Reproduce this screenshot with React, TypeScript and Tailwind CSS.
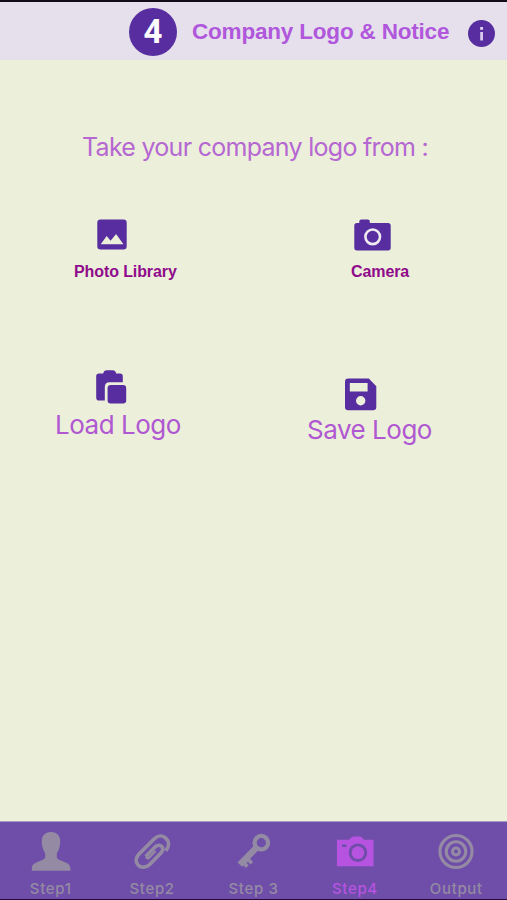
import type { ReactNode } from "react";
import clsx from "clsx";

interface TabItem {
  label: string;
  icon: ReactNode;
  active?: boolean;
}

function InfoIcon() {
  return (
    <svg width="27" height="27" viewBox="0 0 27 27" className="shrink-0">
      <circle cx="13.5" cy="13.5" r="13.5" fill="#572d9f" />
      <rect x="12.2" y="7" width="2.8" height="2.8" fill="#e0d5f0" />
      <rect x="12.2" y="12" width="2.8" height="8.500" fill="#d8caec" />
    </svg>
  );
}

function PhotoIcon() {
  return (
    <svg width="30" height="31" viewBox="0 0 30 31" fill="#572d9f">
      <path
        fillRule="evenodd"
        d="M3.500 .5h23q3.200 0 3.200 3.200v23.600q0 3.200-3.200 3.200h-23q-3.200 0-3.200-3.200v-23.600q0-3.200 3.200-3.200ZM3.700 25.200h22.700l-7.300-10.200-5.500 6.700-3.900-4.700Z"
      />
    </svg>
  );
}

function CameraIcon() {
  return (
    <svg width="37" height="32" viewBox="0 0 37 32">
      <path
        d="M3 4h2.300V2.500Q5.300.500 7.300.500h6.500q2 0 2 2V4H34q2.700 0 2.700 2.700v22q0 2.700-2.700 2.700H3q-2.700 0-2.700-2.700v-22Q.3 4 3 4Z"
        fill="#572d9f"
      />
      <circle cx="18.700" cy="17.800" r="7.300" fill="none" stroke="#efe9f0" strokeWidth="2.600" />
    </svg>
  );
}

function PasteIcon() {
  return (
    <svg width="31" height="34" viewBox="0 0 31 34" fill="#572d9f">
      <path d="M3 3.500h4.200Q8 .300 10.700 .300h6q2.700 0 3.500 3.200H24q2.800 0 2.800 2.800v5.900H13.500q-4.700 0-4.700 4.700v13.600H3q-2.800 0-2.800-2.800V6.300Q.2 3.500 3 3.500Z" />
      <rect x="11.600" y="15" width="18.600" height="18.500" rx="3.200" />
    </svg>
  );
}

function SaveIcon() {
  return (
    <svg width="32" height="33" viewBox="0 0 32 33" fill="#572d9f">
      <path
        fillRule="evenodd"
        d="M3.200.500h20.600l7.500 7.700v20.900q0 3.200-3.200 3.200H3.200Q0 32.300 0 29.100V3.700Q0 .500 3.200.500ZM4.800 5v8.400h17.800V5ZM15.700 18a4.700 4.700 0 1 0 0 9.400 4.700 4.700 0 0 0 0-9.400Z"
      />
    </svg>
  );
}

function PersonIcon() {
  return (
    <svg width="44" height="44" viewBox="0 0 44 44" fill="currentColor">
      <path d="M22 2c6.200 0 9.600 4 9.400 9.900 0 5.100-1.700 9.200-3.400 11.800v4.800c1.800 3.400 13 4.400 13.700 9.300l.2 4H2.300l.2-4c.7-4.900 11.700-5.900 13.500-9.300v-4.800c-1.700-2.600-3.400-6.700-3.400-11.800C12.400 6 15.800 2 22 2Z" />
    </svg>
  );
}

function ClipIcon() {
  return (
    <svg
      width="44"
      height="44"
      viewBox="0 0 44 44"
      fill="none"
      stroke="currentColor"
      strokeWidth="3.800"
      strokeLinejoin="round"
    >
      <path d="M36 21.200c4-4.500 3.600-9.600.4-12.700-3.300-3.200-8.200-3.300-12 .5L9 24.300c-3.900 3.900-4 8.700-1.100 11.700 3 3 8.100 2.900 12-1l11-11.200c2.800-2.900 2.600-5.600 1-7.100-1.700-1.600-4.500-1.600-7.100 1l-9.200 9.500" />
      <path d="m15.500 27.500 2.600 1.700 7.500-7.700" strokeWidth="2.400" />
    </svg>
  );
}

function KeyIcon() {
  return (
    <svg width="44" height="44" viewBox="0 0 44 44">
      <circle cx="29.500" cy="13" r="6.900" fill="none" stroke="currentColor" strokeWidth="4.400" />
      <path
        d="m22.300 15.700 4.600 4.500-8.900 9.300 3.100 3.300-2.500 2.600-2.900-2.900-1.300 1.300 2.200 2.200-2.900 2.900-2.400-2.600-1.500 1.300-4.700-4.300Z"
        fill="currentColor"
      />
    </svg>
  );
}

function TabCameraIcon() {
  return (
    <svg width="44" height="44" viewBox="0 0 44 44" fill="currentColor">
      <path
        fillRule="evenodd"
        d="M3.500 10H16q2.500-3.300 5-3.300h6Q29 6.700 31 10h10v27H3.500ZM25 13.700a9.500 9.500 0 1 0 0 19 9.500 9.500 0 0 0 0-19ZM8.800 14.800v2.500h4.500v-2.500Z"
      />
      <circle cx="25" cy="23.200" r="6.500" />
    </svg>
  );
}

function TargetIcon() {
  return (
    <svg width="44" height="44" viewBox="0 0 44 44" fill="none" stroke="currentColor" strokeWidth="3.200">
      <circle cx="22" cy="22" r="16.400" />
      <circle cx="22" cy="22" r="10" />
      <circle cx="22" cy="22" r="3.600" />
    </svg>
  );
}

const tabs: TabItem[] = [
  { label: "Step1", icon: <PersonIcon /> },
  { label: "Step2", icon: <ClipIcon /> },
  { label: "Step 3", icon: <KeyIcon /> },
  { label: "Step4", icon: <TabCameraIcon />, active: true },
  { label: "Output", icon: <TargetIcon /> },
];

export default function App() {
  const captionClass =
    "block whitespace-nowrap font-['Liberation_Sans',sans-serif] text-base leading-5 font-bold tracking-[-0.1px] text-[#8f0b8b]";
  const actionClass =
    "block whitespace-nowrap text-[26px] leading-8 font-normal tracking-[-0.48px] text-[#b057d2]";

  return (
    <div className="flex h-[900px] w-[507px] flex-col overflow-hidden border-b border-[#26083f] bg-[#ecefda] font-[Inter,sans-serif]">
      <header className="flex h-15 shrink-0 items-center border-t-2 border-[#120c18] bg-[#e6e0ed] pl-[129px]">
        <div className="mt-0.5 flex size-12 shrink-0 items-center justify-center rounded-full bg-[#572d9f] font-[Roboto,sans-serif] text-[33px] leading-none font-bold text-white">
          <span className="-mt-0.5">4</span>
        </div>
        <h1 className="ml-[15px] w-[260px] shrink-0 pt-0.5 font-['Liberation_Sans',sans-serif] text-[22.500px] leading-7 font-bold tracking-[-0.19px] whitespace-nowrap text-[#b057dc]">
          Company Logo &amp; Notice
        </h1>
        <button type="button" aria-label="Info" className="ml-4 pt-1">
          <InfoIcon />
        </button>
      </header>

      <main className="flex-1">
        <p className="mt-[71px] pl-[82px] text-[25px] leading-8 tracking-[-0.72px] whitespace-nowrap text-[#b567d2]">
          Take your company logo from :
        </p>

        <div className="mt-14 flex h-[62px] items-start">
          <button type="button" className="ml-[74px] w-[277px] text-left">
            <span className="block pl-[23px]">
              <PhotoIcon />
            </span>
            <span className={clsx(captionClass, "mt-3")}>Photo Library</span>
          </button>
          <button type="button" className="text-left">
            <span className="block pl-[3px]">
              <CameraIcon />
            </span>
            <span className={clsx(captionClass, "mt-[11px]")}>Camera</span>
          </button>
        </div>

        <div className="mt-[89px] flex items-start">
          <button type="button" className="ml-[55px] w-[252px] text-left">
            <span className="block pl-[41px]">
              <PasteIcon />
            </span>
            <span className={clsx(actionClass, "mt-[5px]")}>Load Logo</span>
          </button>
          <button type="button" className="mt-2 text-left">
            <span className="block pl-[38px]">
              <SaveIcon />
            </span>
            <span className={clsx(actionClass, "mt-[3px]")}>Save Logo</span>
          </button>
        </div>
      </main>

      <nav className="flex h-[78px] shrink-0 border-t border-[#a99abf] bg-[#6f4ea9]">
        {tabs.map((tab) => (
          <button
            key={tab.label}
            type="button"
            className={clsx(
              "flex flex-1 flex-col items-center pt-2",
              tab.active ? "text-[#b653e0]" : "text-[#948aa3]",
            )}
          >
            {tab.icon}
            <span className="mt-1.5 text-[15px] leading-5 font-medium tracking-[0.65px] whitespace-nowrap">
              {tab.label}
            </span>
          </button>
        ))}
      </nav>
    </div>
  );
}
